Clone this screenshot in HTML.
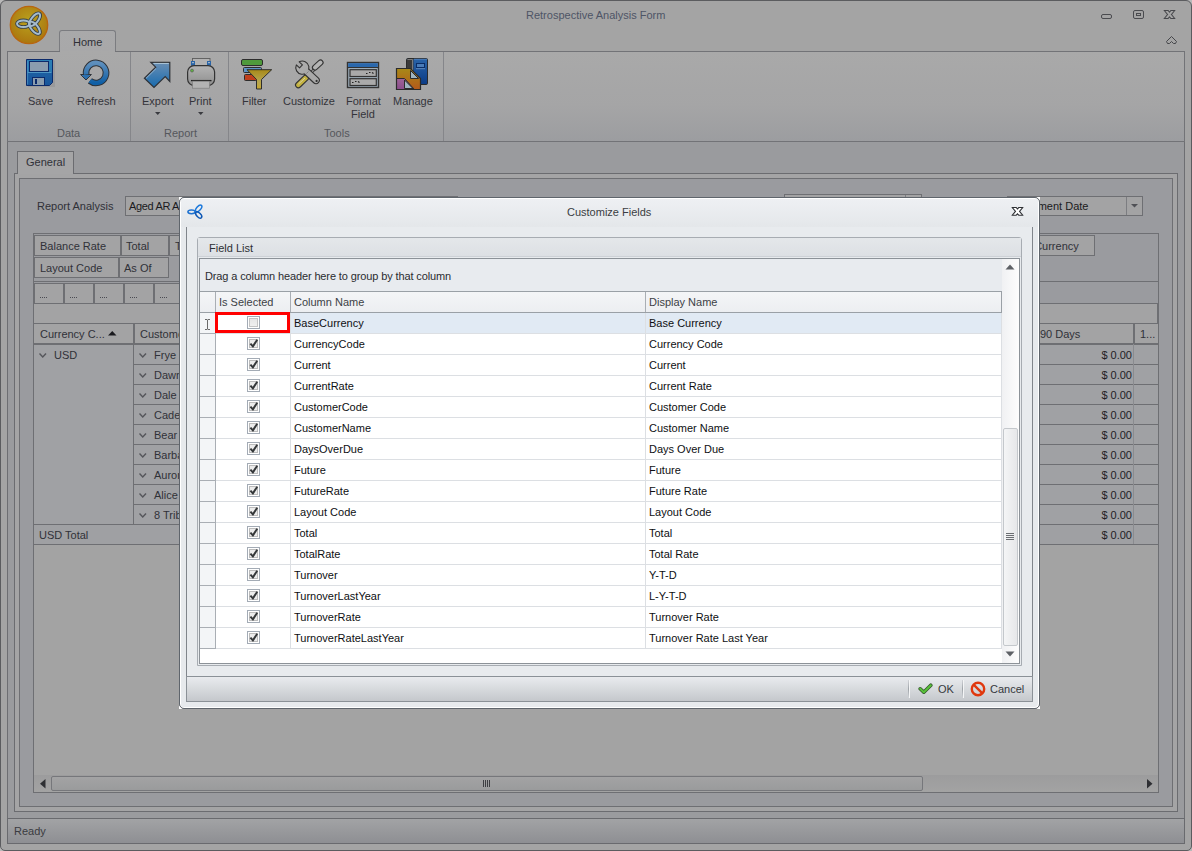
<!DOCTYPE html>
<html><head><meta charset="utf-8">
<style>
*{margin:0;padding:0;box-sizing:border-box}
html,body{width:1192px;height:851px;overflow:hidden;background:#b9b9b9}
body{position:relative;font-family:"Liberation Sans",sans-serif;font-size:11px;color:#2a2a2e}
.a{position:absolute}
.t{position:absolute;white-space:nowrap;line-height:13px}
#win{left:0;top:0;width:1192px;height:851px;background:#a4a4a4;border:1px solid #5b5c5f;border-radius:6px 6px 5px 5px}
#ribbon{left:7px;top:51px;width:1178px;height:91px;border:1px solid #727377;background:linear-gradient(#a9a9a9,#a5a5a6 60%,#9c9da0);}
.sep{position:absolute;width:1px;background:#85868a}
.rl{position:absolute;white-space:nowrap;color:#34343a;font-size:11px;line-height:13px;text-align:center}
.gl{position:absolute;white-space:nowrap;color:#55575c;font-size:11px;line-height:13px}
#content{left:7px;top:142px;width:1178px;height:677px;background:#9a9b9e;border-left:1px solid #6d6e72;border-right:1px solid #6d6e72}
#status{left:7px;top:818px;width:1178px;height:26px;border:1px solid #696a6e;background:linear-gradient(#a2a3a5,#8e8f93)}
</style></head><body>
<div id="win" class="a"></div>
<!-- title -->
<div class="t" style="left:526px;top:9px;color:#4e5566;font-size:11px">Retrospective Analysis Form</div>
<!-- logo -->
<svg class="a" style="left:9px;top:5px" width="41" height="41" viewBox="0 0 41 41">
<defs><radialGradient id="lg" cx="50%" cy="40%" r="60%"><stop offset="0" stop-color="#b9a21e"/><stop offset="1" stop-color="#ab760f"/></radialGradient></defs>
<circle cx="20" cy="20" r="18.7" fill="url(#lg)" stroke="#b8650f" stroke-width="1.3"/>
</svg>
<!-- window buttons -->
<svg class="a" style="left:1098px;top:8px" width="80" height="14" viewBox="0 0 80 14">
<rect x="3.5" y="6.5" width="10" height="4" rx="1.5" fill="none" stroke="#4a4b4f" stroke-width="1"/>
<rect x="35.5" y="2.5" width="10" height="8" rx="1.5" fill="none" stroke="#4a4b4f" stroke-width="1"/>
<rect x="38.5" y="5.5" width="4" height="2" fill="none" stroke="#4a4b4f" stroke-width="1"/>
<defs><clipPath id="wx1"><rect x="60" y="2" width="20" height="9" rx="1"/></clipPath><clipPath id="wx2"><rect x="60" y="3" width="20" height="7"/></clipPath></defs><g clip-path="url(#wx1)" stroke="#46474b" stroke-width="4"><path d="M66.8 0.8L76.2 12.2M76.2 0.8L66.8 12.2"/></g><g clip-path="url(#wx2)" stroke="#a5a5a5" stroke-width="2"><path d="M66.8 0.8L76.2 12.2M76.2 0.8L66.8 12.2"/></g>
</svg>
<svg class="a" style="left:1165px;top:35px" width="13" height="10" viewBox="0 0 13 10"><path d="M6.5 1.5L11.5 6.5L10.5 8.5H8.5L6.5 6.5L4.5 8.5H2.5L1.5 6.5Z" fill="none" stroke="#45464a" stroke-width="1" stroke-linejoin="round"/></svg>
<svg class="a" style="left:1171px;top:829px" width="12" height="12" viewBox="0 0 12 12"><g fill="#6b6c70"><rect x="8" y="1" width="2" height="2"/><rect x="4" y="5" width="2" height="2"/><rect x="8" y="5" width="2" height="2"/><rect x="0" y="9" width="2" height="2"/><rect x="4" y="9" width="2" height="2"/><rect x="8" y="9" width="2" height="2"/></g></svg>
<!-- home tab -->
<div class="a" style="left:59px;top:30px;width:57px;height:22px;border:1px solid #7b7c80;border-bottom:none;border-radius:3px 3px 0 0;background:linear-gradient(#a9a9aa,#a8a8a9)"></div>
<div class="t" style="left:73px;top:36px;color:#2f3036">Home</div>
<!-- ribbon -->
<div id="ribbon" class="a"></div>
<div class="a" style="left:60px;top:51px;width:55px;height:1px;background:#a9a9a9"></div>
<div class="sep" style="left:130px;top:52px;height:89px"></div>
<div class="sep" style="left:228px;top:52px;height:89px"></div>
<div class="sep" style="left:443px;top:52px;height:89px"></div>
<div class="rl" style="left:28px;top:95px">Save</div>
<div class="rl" style="left:77px;top:95px">Refresh</div>
<div class="rl" style="left:142px;top:95px">Export</div>
<div class="rl" style="left:189px;top:95px">Print</div>
<div class="rl" style="left:242px;top:95px">Filter</div>
<div class="rl" style="left:283px;top:95px">Customize</div>
<div class="rl" style="left:346px;top:95px">Format</div>
<div class="rl" style="left:351px;top:108px">Field</div>
<div class="rl" style="left:393px;top:95px">Manage</div>
<div class="gl" style="left:57px;top:127px">Data</div>
<div class="gl" style="left:164px;top:127px">Report</div>
<div class="gl" style="left:324px;top:127px">Tools</div>
<svg class="a" style="left:0;top:0" width="450" height="120" viewBox="0 0 450 120">
<defs>
<linearGradient id="fl1" x1="0" y1="0" x2="0" y2="1"><stop offset="0" stop-color="#2c80b6"/><stop offset="0.47" stop-color="#2a7ab2"/><stop offset="0.5" stop-color="#1d5fa2"/><stop offset="1" stop-color="#17559b"/></linearGradient>
<linearGradient id="rf" x1="0" y1="0" x2="0" y2="1"><stop offset="0" stop-color="#5e8fbd"/><stop offset="1" stop-color="#0f5fa6"/></linearGradient>
<linearGradient id="ex" x1="0" y1="0" x2="0" y2="1"><stop offset="0" stop-color="#6a8fb4"/><stop offset="1" stop-color="#176aae"/></linearGradient>
<linearGradient id="pr" x1="0" y1="0" x2="0" y2="1"><stop offset="0" stop-color="#b4b4b4"/><stop offset="1" stop-color="#8e8e8e"/></linearGradient>
<linearGradient id="fu" x1="0" y1="0" x2="0" y2="1"><stop offset="0" stop-color="#a88a18"/><stop offset="0.6" stop-color="#b5a550"/><stop offset="1" stop-color="#c8a830"/></linearGradient>
<linearGradient id="bk" x1="0" y1="0" x2="0" y2="1"><stop offset="0" stop-color="#2a64a8"/><stop offset="1" stop-color="#0b3b86"/></linearGradient>
<linearGradient id="og" x1="0" y1="0" x2="0" y2="1"><stop offset="0" stop-color="#a88818"/><stop offset="1" stop-color="#b45a1a"/></linearGradient>
</defs>
<!-- logo knot -->
<g fill="none" stroke="#35404a" stroke-width="3.7"><ellipse cx="23.4" cy="23.7" rx="6.4" ry="3.3"/>
<ellipse cx="34.7" cy="19.7" rx="7.7" ry="3.3" transform="rotate(-51.3 34.7 19.7)"/>
<ellipse cx="34.5" cy="27.8" rx="7.5" ry="3.3" transform="rotate(50.4 34.5 27.8)"/></g>
<g fill="none" stroke="#a6bccc" stroke-width="2"><ellipse cx="23.4" cy="23.7" rx="6.4" ry="3.3"/>
<ellipse cx="34.7" cy="19.7" rx="7.7" ry="3.3" transform="rotate(-51.3 34.7 19.7)"/>
<ellipse cx="34.5" cy="27.8" rx="7.5" ry="3.3" transform="rotate(50.4 34.5 27.8)"/></g>
<!-- save -->
<path d="M28 87H55V61L53.8 60H28Z" fill="#8e8e90" opacity="0.5"/>
<path d="M26.5 59.5H52.5V82.5L49.5 85.5H26.5Z" fill="url(#fl1)" stroke="#0c2a6a" stroke-width="1"/>
<path d="M27.5 72.5H51.5" stroke="#4f97c4" stroke-width="1"/><path d="M27.6 61V84.5" stroke="#4b94c4" stroke-width="0.8"/>
<rect x="29.5" y="61.5" width="19" height="10" fill="#8b9dae" stroke="#0c2a6a" stroke-width="1"/>
<rect x="32.5" y="77.5" width="12" height="8" fill="#8b9dae" stroke="#0c2a6a" stroke-width="1"/>
<rect x="35" y="79" width="2" height="5" fill="#0c2a6a"/>
<!-- refresh -->
<path d="M86.2 74.5A10 10 0 1 1 89.9 80.8" fill="none" stroke="#2e3238" stroke-width="6.6"/>
<path d="M80.6 74.5H91.4L86 80Z" fill="url(#rf)" stroke="#2e3238" stroke-width="1" stroke-linejoin="round"/>
<path d="M86.2 74.5A10 10 0 1 1 89.9 80.8" fill="none" stroke="url(#rf)" stroke-width="4.6"/>
<path d="M82 75H90L86 79Z" fill="#2b6fae"/>
<!-- export -->
<path d="M150.8 62.3H169.8V81.4L165.2 76.5L154 87.5L144.4 78.2L155.7 67.2Z" fill="url(#ex)" stroke="#2f3237" stroke-width="1.2" stroke-linejoin="miter"/>
<path d="M153.5 63.4H168.8" stroke="#b9cfdd" stroke-width="0.9"/><path d="M146 78.3L156 68.5" stroke="#a9c3d8" stroke-width="0.8"/>
<!-- print -->
<rect x="192.5" y="58.5" width="17.5" height="8" fill="#b2b2b2" stroke="#5c5c5c" stroke-width="0.9"/>
<rect x="191" y="61" width="4" height="4.8" fill="#2a64a6"/>
<rect x="207" y="61" width="4" height="4.8" fill="#2a64a6"/>
<rect x="192" y="62" width="2" height="1.2" fill="#9ab4cc"/>
<rect x="208" y="62" width="2" height="1.2" fill="#9ab4cc"/>
<rect x="187.6" y="65.6" width="27" height="20" rx="6.5" fill="url(#pr)" stroke="#333" stroke-width="1.2"/>
<circle cx="192" cy="70.6" r="1.5" fill="#5fae44" stroke="#555" stroke-width="0.6"/>
<path d="M191 80.6H211.5" stroke="#222" stroke-width="1.3"/>
<rect x="192.5" y="81.2" width="17" height="7" fill="#b3b3b3" stroke="#7e7e7e" stroke-width="0.7"/>
<!-- filter -->
<rect x="241.5" y="59.5" width="21" height="6" rx="1.5" fill="#4f9a3c" stroke="#2d2d2d" stroke-width="1"/>
<rect x="243.5" y="67.5" width="18" height="5" rx="1" fill="#5b93c5" stroke="#2d2d2d" stroke-width="1"/>
<rect x="244.5" y="74.5" width="12" height="6" rx="1" fill="#c0401c" stroke="#2d2d2d" stroke-width="1"/>
<path d="M247 69.7H271.7L261.5 79.5V89H256.5V79.5Z" fill="url(#fu)" stroke="#2d2d2d" stroke-width="1" stroke-linejoin="round"/>
<!-- customize -->
<path d="M307 77L319 64.5" stroke="#333" stroke-width="3"/>
<path d="M307 77L319 64.5" stroke="#a0a0a0" stroke-width="1.3"/>
<path d="M315 67.5L320.5 62.5" stroke="#333" stroke-width="6.2" stroke-linecap="round"/>
<path d="M315 67.5L320.5 62.5" stroke="#b4b4b4" stroke-width="4" stroke-linecap="round"/>
<path d="M298.3 85L306 77.6" stroke="#333" stroke-width="6.6" stroke-linecap="round"/>
<path d="M298.3 85L306 77.6" stroke="#c3b241" stroke-width="4.4" stroke-linecap="round"/>
<path d="M298.5 84L305 78" stroke="#d8d0a0" stroke-width="1"/>
<g transform="translate(302.3 67.6) rotate(43)">
<rect x="0" y="-3.3" width="22" height="6.6" rx="3.3" fill="#a9a9a9" stroke="#333" stroke-width="1.1"/>
<path d="M-6.2 -2.1A6.6 6.6 0 1 1 -6.2 2.1L-1.8 2.1L-1.8 -2.1Z" fill="#ababab" stroke="#333" stroke-width="1.1" stroke-linejoin="round"/>
<rect x="3" y="-2.7" width="4" height="5.4" fill="#a9a9a9"/>
<circle cx="19.5" cy="0" r="1.1" fill="#333"/>
</g>
<!-- format field -->
<rect x="347.5" y="62.5" width="31" height="25" fill="#9eadb9" stroke="#333" stroke-width="1.4"/>
<rect x="348.2" y="63.2" width="29.6" height="4.3" fill="#2a68ad"/>
<path d="M347.5 67.5H378.5" stroke="#333" stroke-width="1"/>
<rect x="350" y="69.7" width="26.3" height="6.8" fill="#aaaaaa" stroke="#333" stroke-width="1.2"/>
<rect x="350" y="78.7" width="26.3" height="6.8" fill="#aaaaaa" stroke="#333" stroke-width="1.2"/>
<path d="M366 73.5h1.5M369 72.5h1.5M372 72.5l1.5 1" stroke="#222" stroke-width="1.2"/>
<path d="M352 82.5h1.5M355 81.5h1.5M358 81.5l1.5 1" stroke="#222" stroke-width="1.2"/>
<!-- manage -->
<defs><linearGradient id="pk" x1="0" y1="0" x2="0" y2="1"><stop offset="0" stop-color="#b07aa6"/><stop offset="1" stop-color="#8a4c8a"/></linearGradient></defs>
<rect x="406.5" y="58.5" width="21" height="26" rx="1.2" fill="url(#bk)" stroke="#2b2b2b" stroke-width="1"/>
<rect x="407" y="59" width="6.5" height="25" fill="#3a3a3a"/>
<path d="M407.5 59.5H412.5V80" stroke="#8a8a8a" stroke-width="0.8" fill="none"/>
<path d="M414 59.2H427" stroke="#5a88c0" stroke-width="0.8"/>
<rect x="416.5" y="63.5" width="8" height="4" fill="#4a7cb8" stroke="#0b2d66" stroke-width="1"/>
<path d="M416 68.7H425" stroke="#6e96c4" stroke-width="0.8"/>
<path d="M396.5 68.5H410.5L420.5 78.5V89.5H396.5Z" fill="url(#pk)"/>
<path d="M397 69H410.5L420 78.5V89H414L404.5 78.5H397Z" fill="url(#og)"/>
<path d="M397 78.5H404.5L414 89" fill="none" stroke="#2b2b2b" stroke-width="1"/>
<path d="M410.5 70.5V78.5H418.5Z" fill="#9fb4bf" stroke="#2b2b2b" stroke-width="1"/>
<path d="M404.5 80V88.5H413Z" fill="#9fb4bf" stroke="#2b2b2b" stroke-width="1"/>
<path d="M396.5 68.5H410.5L420.5 78.5V89.5H396.5Z" fill="none" stroke="#2b2b2b" stroke-width="1.2" stroke-linejoin="miter"/>
<!-- dropdown arrows -->
<path d="M155 112H160.5L157.75 115Z" fill="#3a3b40"/>
<path d="M198 112H203.5L200.75 115Z" fill="#3a3b40"/>
</svg>
<!-- content -->
<div id="content" class="a"></div>

<!-- tab page -->
<div class="a" style="left:17px;top:151px;width:57px;height:23px;border:1px solid #6b6c70;border-bottom:none;background:#a5a5a6;z-index:2"></div>
<div class="t" style="left:26px;top:156px;color:#303138;z-index:3">General</div>
<div class="a" style="left:14px;top:173px;width:1164px;height:639px;border:1px solid #6b6c70;background:#a4a4a5"></div>
<div class="a" style="left:19px;top:178px;width:1154px;height:629px;border:1px solid #6e6f73;background:#9a9b9f"></div>
<div class="t" style="left:37px;top:200px;color:#303138">Report Analysis</div>
<div class="a" style="left:125px;top:196px;width:333px;height:20px;border:1px solid #6e6f73;background:#a3a3a4"></div>
<div class="t" style="left:129px;top:200px;color:#1a1a20;letter-spacing:-0.35px">Aged AR Analysis</div>
<div class="a" style="left:784px;top:194px;width:138px;height:20px;border:1px solid #6e6f73;background:#a3a3a4"></div><div class="a" style="left:905px;top:195px;width:1px;height:18px;background:#7c7d81"></div>
<div class="a" style="left:1007px;top:196px;width:136px;height:20px;border:1px solid #6e6f73;background:#a3a3a4"></div>
<div class="a" style="left:1126px;top:197px;width:1px;height:18px;background:#7c7d81"></div>
<div class="t" style="left:1012px;top:200px;color:#1a1a20">Statement Date</div>
<svg class="a" style="left:1131px;top:204px" width="8" height="4"><path d="M0 0H7L3.5 3.5Z" fill="#505156"/></svg>
<!-- grid -->
<div id="grid" class="a" style="left:33px;top:233px;width:1126px;height:560px;border:1px solid #6e6f73;background:#a3a3a3;overflow:hidden">
</div>
<div class="a" style="left:34px;top:234px;width:1124px;height:47px;background:#9a9b9f"></div>
<div class="a" style="left:34px;top:235px;width:87px;height:21px;border:1px solid #6e6f73;background:#a3a3a4"></div>
<div class="t" style="left:40px;top:240px;color:#303138">Balance Rate</div>
<div class="a" style="left:121px;top:235px;width:48px;height:21px;border:1px solid #6e6f73;background:#a3a3a4"></div>
<div class="t" style="left:126px;top:240px;color:#303138">Total</div>
<div class="a" style="left:169px;top:235px;width:60px;height:21px;border:1px solid #6e6f73;background:#a3a3a4"></div>
<div class="t" style="left:175px;top:240px;color:#303138">Total Rate</div>
<div class="a" style="left:34px;top:257px;width:85px;height:21px;border:1px solid #6e6f73;background:#a3a3a4"></div>
<div class="t" style="left:40px;top:262px;color:#303138">Layout Code</div>
<div class="a" style="left:119px;top:257px;width:50px;height:21px;border:1px solid #6e6f73;background:#a3a3a4"></div>
<div class="t" style="left:124px;top:262px;color:#303138">As Of</div>
<div class="a" style="left:1000px;top:235px;width:95px;height:21px;border:1px solid #6e6f73;background:#a3a3a4"></div>
<div class="t" style="left:1006px;top:240px;color:#303138">Base Currency</div>
<div class="a" style="left:34px;top:281px;width:1124px;height:22px;border-top:1px solid #6e6f73;background:#9a9b9f"></div>
<div class="a" style="left:34px;top:283px;width:30px;height:21px;border:1px solid #6e6f73;background:#a3a3a4"></div>
<div class="a" style="left:40px;top:297px;width:7px;height:1px;background:repeating-linear-gradient(90deg,#4a4b52 0 1px,transparent 1px 2px)"></div>
<div class="a" style="left:64px;top:283px;width:30px;height:21px;border:1px solid #6e6f73;background:#a3a3a4"></div>
<div class="a" style="left:70px;top:297px;width:7px;height:1px;background:repeating-linear-gradient(90deg,#4a4b52 0 1px,transparent 1px 2px)"></div>
<div class="a" style="left:94px;top:283px;width:30px;height:21px;border:1px solid #6e6f73;background:#a3a3a4"></div>
<div class="a" style="left:100px;top:297px;width:7px;height:1px;background:repeating-linear-gradient(90deg,#4a4b52 0 1px,transparent 1px 2px)"></div>
<div class="a" style="left:124px;top:283px;width:30px;height:21px;border:1px solid #6e6f73;background:#a3a3a4"></div>
<div class="a" style="left:130px;top:297px;width:7px;height:1px;background:repeating-linear-gradient(90deg,#4a4b52 0 1px,transparent 1px 2px)"></div>
<div class="a" style="left:154px;top:283px;width:30px;height:21px;border:1px solid #6e6f73;background:#a3a3a4"></div>
<div class="a" style="left:160px;top:297px;width:7px;height:1px;background:repeating-linear-gradient(90deg,#4a4b52 0 1px,transparent 1px 2px)"></div>
<div class="a" style="left:184px;top:283px;width:30px;height:21px;border:1px solid #6e6f73;background:#a3a3a4"></div>
<div class="a" style="left:190px;top:297px;width:7px;height:1px;background:repeating-linear-gradient(90deg,#4a4b52 0 1px,transparent 1px 2px)"></div>
<div class="a" style="left:34px;top:303px;width:1124px;height:21px;border-top:1px solid #6e6f73;border-right:1px solid #6e6f73;background:#a3a3a4"></div>
<div class="a" style="left:34px;top:323px;width:1124px;height:22px;border-top:1px solid #6e6f73;border-bottom:2px solid #6e6f73;background:#a3a3a4"></div>
<div class="a" style="left:133px;top:324px;width:2px;height:19px;background:#6e6f73"></div>
<div class="a" style="left:1133px;top:324px;width:2px;height:19px;background:#6e6f73"></div>
<div class="t" style="left:40px;top:328px;color:#303138">Currency C...</div>
<svg class="a" style="left:108px;top:331px" width="9" height="5"><path d="M0 4.5H8.5L4.25 0Z" fill="#1a1a1e"/></svg>
<div class="t" style="left:140px;top:328px;color:#303138">Customer Name</div>
<div class="t" style="left:1040px;top:328px;color:#303138">90 Days</div>
<div class="t" style="left:1140px;top:328px;color:#303138">1...</div>
<div class="a" style="left:34px;top:345px;width:100px;height:179px;border-right:1px solid #6e6f73;background:#a0a1a4"></div>
<svg class="a" style="left:39px;top:353px" width="8" height="5"><path d="M0.5 0.5L3.75 4L7 0.5" fill="none" stroke="#55565b" stroke-width="1.4"/></svg>
<div class="t" style="left:54px;top:349px;color:#303138">USD</div>
<div class="a" style="left:134px;top:345px;width:1024px;height:20px;border-bottom:1px solid #6e6f73;background:#a0a1a4"></div>
<svg class="a" style="left:139px;top:353px" width="8" height="5"><path d="M0.5 0.5L3.75 4L7 0.5" fill="none" stroke="#55565b" stroke-width="1.4"/></svg>
<div class="t" style="left:154px;top:349px;color:#303138">Frye Electronics</div>
<div class="a" style="left:134px;top:365px;width:1024px;height:20px;border-bottom:1px solid #6e6f73;background:#a0a1a4"></div>
<svg class="a" style="left:139px;top:373px" width="8" height="5"><path d="M0.5 0.5L3.75 4L7 0.5" fill="none" stroke="#55565b" stroke-width="1.4"/></svg>
<div class="t" style="left:154px;top:369px;color:#303138">Dawn Mechanical</div>
<div class="a" style="left:134px;top:385px;width:1024px;height:20px;border-bottom:1px solid #6e6f73;background:#a0a1a4"></div>
<svg class="a" style="left:139px;top:393px" width="8" height="5"><path d="M0.5 0.5L3.75 4L7 0.5" fill="none" stroke="#55565b" stroke-width="1.4"/></svg>
<div class="t" style="left:154px;top:389px;color:#303138">Dale Industries</div>
<div class="a" style="left:134px;top:405px;width:1024px;height:20px;border-bottom:1px solid #6e6f73;background:#a0a1a4"></div>
<svg class="a" style="left:139px;top:413px" width="8" height="5"><path d="M0.5 0.5L3.75 4L7 0.5" fill="none" stroke="#55565b" stroke-width="1.4"/></svg>
<div class="t" style="left:154px;top:409px;color:#303138">Cade Corporation</div>
<div class="a" style="left:134px;top:425px;width:1024px;height:20px;border-bottom:1px solid #6e6f73;background:#a0a1a4"></div>
<svg class="a" style="left:139px;top:433px" width="8" height="5"><path d="M0.5 0.5L3.75 4L7 0.5" fill="none" stroke="#55565b" stroke-width="1.4"/></svg>
<div class="t" style="left:154px;top:429px;color:#303138">Bear Creek</div>
<div class="a" style="left:134px;top:445px;width:1024px;height:20px;border-bottom:1px solid #6e6f73;background:#a0a1a4"></div>
<svg class="a" style="left:139px;top:453px" width="8" height="5"><path d="M0.5 0.5L3.75 4L7 0.5" fill="none" stroke="#55565b" stroke-width="1.4"/></svg>
<div class="t" style="left:154px;top:449px;color:#303138">Barbara Tomkins</div>
<div class="a" style="left:134px;top:465px;width:1024px;height:20px;border-bottom:1px solid #6e6f73;background:#a0a1a4"></div>
<svg class="a" style="left:139px;top:473px" width="8" height="5"><path d="M0.5 0.5L3.75 4L7 0.5" fill="none" stroke="#55565b" stroke-width="1.4"/></svg>
<div class="t" style="left:154px;top:469px;color:#303138">Aurora Inc</div>
<div class="a" style="left:134px;top:485px;width:1024px;height:20px;border-bottom:1px solid #6e6f73;background:#a0a1a4"></div>
<svg class="a" style="left:139px;top:493px" width="8" height="5"><path d="M0.5 0.5L3.75 4L7 0.5" fill="none" stroke="#55565b" stroke-width="1.4"/></svg>
<div class="t" style="left:154px;top:489px;color:#303138">Alice Springs</div>
<div class="a" style="left:134px;top:505px;width:1024px;height:20px;border-bottom:1px solid #6e6f73;background:#a0a1a4"></div>
<svg class="a" style="left:139px;top:513px" width="8" height="5"><path d="M0.5 0.5L3.75 4L7 0.5" fill="none" stroke="#55565b" stroke-width="1.4"/></svg>
<div class="t" style="left:154px;top:509px;color:#303138">8 Tribes Casino</div>
<div class="a" style="left:34px;top:524px;width:1124px;height:21px;border-top:1px solid #6e6f73;border-bottom:1px solid #6e6f73;background:#9fa0a3"></div>
<div class="t" style="left:39px;top:529px;color:#303138">USD Total</div>
<div class="t" style="left:1097px;top:349px;color:#1e1e24;width:35px;text-align:right">$ 0.00</div>
<div class="a" style="left:1133px;top:344px;width:1px;height:20px;background:#8a8b8f"></div>
<div class="t" style="left:1097px;top:369px;color:#1e1e24;width:35px;text-align:right">$ 0.00</div>
<div class="a" style="left:1133px;top:364px;width:1px;height:20px;background:#8a8b8f"></div>
<div class="t" style="left:1097px;top:389px;color:#1e1e24;width:35px;text-align:right">$ 0.00</div>
<div class="a" style="left:1133px;top:384px;width:1px;height:20px;background:#8a8b8f"></div>
<div class="t" style="left:1097px;top:409px;color:#1e1e24;width:35px;text-align:right">$ 0.00</div>
<div class="a" style="left:1133px;top:404px;width:1px;height:20px;background:#8a8b8f"></div>
<div class="t" style="left:1097px;top:429px;color:#1e1e24;width:35px;text-align:right">$ 0.00</div>
<div class="a" style="left:1133px;top:424px;width:1px;height:20px;background:#8a8b8f"></div>
<div class="t" style="left:1097px;top:449px;color:#1e1e24;width:35px;text-align:right">$ 0.00</div>
<div class="a" style="left:1133px;top:444px;width:1px;height:20px;background:#8a8b8f"></div>
<div class="t" style="left:1097px;top:469px;color:#1e1e24;width:35px;text-align:right">$ 0.00</div>
<div class="a" style="left:1133px;top:464px;width:1px;height:20px;background:#8a8b8f"></div>
<div class="t" style="left:1097px;top:489px;color:#1e1e24;width:35px;text-align:right">$ 0.00</div>
<div class="a" style="left:1133px;top:484px;width:1px;height:20px;background:#8a8b8f"></div>
<div class="t" style="left:1097px;top:509px;color:#1e1e24;width:35px;text-align:right">$ 0.00</div>
<div class="a" style="left:1133px;top:504px;width:1px;height:20px;background:#8a8b8f"></div>
<div class="t" style="left:1097px;top:529px;color:#1e1e24;width:35px;text-align:right">$ 0.00</div>
<div class="a" style="left:1133px;top:524px;width:1px;height:20px;background:#8a8b8f"></div>
<div class="a" style="left:34px;top:775px;width:1124px;height:17px;background:linear-gradient(#9c9c9d,#a3a3a3)"></div>
<svg class="a" style="left:40px;top:779px" width="6" height="10"><path d="M5.5 0V9.5L0 4.75Z" fill="#2e2f33"/></svg>
<svg class="a" style="left:1147px;top:779px" width="6" height="10"><path d="M0 0V9.5L5.5 4.75Z" fill="#2e2f33"/></svg>
<div class="a" style="left:51px;top:776px;width:872px;height:15px;border:1px solid #76777b;border-radius:2px;background:linear-gradient(#a3a3a4,#9a9b9c)"></div>
<div class="a" style="left:483px;top:780px;width:1px;height:7px;background:#3d3e42"></div>
<div class="a" style="left:485px;top:780px;width:1px;height:7px;background:#3d3e42"></div>
<div class="a" style="left:487px;top:780px;width:1px;height:7px;background:#3d3e42"></div>
<div class="a" style="left:489px;top:780px;width:1px;height:7px;background:#3d3e42"></div>
<div id="status" class="a"></div>
<div class="t" style="left:14px;top:825px;color:#3a3b40">Ready</div>
<div class="a" style="left:179px;top:197px;width:3px;height:3px;background:#fff"></div><div class="a" style="left:1037px;top:197px;width:3px;height:3px;background:#fff"></div><div class="a" style="left:179px;top:706px;width:3px;height:3px;background:#fff"></div><div class="a" style="left:1037px;top:706px;width:3px;height:3px;background:#fff"></div>
<div id="dlg" class="a" style="left:179px;top:197px;width:861px;height:512px;border:1px solid #5f656c;border-radius:5px;background:#e7eaed;box-shadow:inset 1px 1px 0 #fff, inset -1px -1px 0 #fff;overflow:hidden">
<div class="a" style="left:1px;top:1px;width:857px;height:28px;background:linear-gradient(#eef0f3,#e4e7ea)"></div>
</div>
<svg class="a" style="left:184px;top:201px" width="24" height="22" viewBox="0 0 24 22"><g fill="none" stroke-width="1.5">
<ellipse cx="7.5" cy="10.8" rx="3.6" ry="1.9" stroke="#1f72d0"/>
<ellipse cx="14.7" cy="7.4" rx="4.1" ry="2" transform="rotate(-48.5 14.7 7.4)" stroke="#1a78dc"/>
<ellipse cx="14.7" cy="14" rx="3.8" ry="2" transform="rotate(44.5 14.7 14)" stroke="#0d57b5"/>
</g></svg>
<div class="t" style="left:567px;top:206px;color:#3a3d42">Customize Fields</div>
<svg class="a" style="left:1011px;top:206px" width="13" height="11" viewBox="0 0 13 11"><defs><clipPath id="cx1"><rect x="0" y="1" width="13" height="8.8" rx="1"/></clipPath><clipPath id="cx2"><rect x="0" y="2" width="13" height="6.8"/></clipPath></defs>
<g clip-path="url(#cx1)" stroke="#2e3034" stroke-width="4.2" stroke-linecap="butt"><path d="M1.7 -0.3L11.3 11.1M11.3 -0.3L1.7 11.1"/></g>
<g clip-path="url(#cx2)" stroke="#fff" stroke-width="2"><path d="M1.7 -0.3L11.3 11.1M11.3 -0.3L1.7 11.1"/></g></svg>
<div class="a" style="left:186px;top:227px;width:847px;height:450px;border-left:1px solid #80858b;border-right:1px solid #80858b;background:#e8ebee"></div>
<div class="a" style="left:197px;top:237px;width:825px;height:429px;border:1px solid #a7acb2;border-radius:3px 3px 0 0;background:#e8ebee"></div>
<div class="a" style="left:198px;top:238px;width:823px;height:19px;background:linear-gradient(#e4e7ea,#dde0e4);border-bottom:1px solid #cdd1d6"></div>
<div class="t" style="left:209px;top:242px;color:#2c2f34">Field List</div>
<div class="a" style="left:199px;top:258px;width:821px;height:406px;border:1px solid #8c9298;background:#fff"></div>
<div class="a" style="left:200px;top:259px;width:802px;height:32px;background:#e8ebef"></div>
<div class="t" style="left:205px;top:270px;color:#2a2c30;letter-spacing:-0.12px">Drag a column header here to group by that column</div>
<div class="a" style="left:200px;top:291px;width:802px;height:22px;border-top:1px solid #9aa0a6;border-bottom:1px solid #9aa0a6;border-right:1px solid #9aa0a6;background:linear-gradient(#f4f5f7,#eceef1)"></div>
<div class="a" style="left:215px;top:292px;width:1px;height:20px;background:#a9aeb4"></div>
<div class="a" style="left:290px;top:292px;width:1px;height:20px;background:#a9aeb4"></div>
<div class="a" style="left:645px;top:292px;width:1px;height:20px;background:#a9aeb4"></div>
<div class="t" style="left:219px;top:296px;color:#3c3f45">Is Selected</div>
<div class="t" style="left:294px;top:296px;color:#3c3f45">Column Name</div>
<div class="t" style="left:649px;top:296px;color:#3c3f45">Display Name</div>
<div class="a" style="left:200px;top:313px;width:16px;height:336px;background:#f3f5f7;border-right:1px solid #a9aeb4"></div>
<div class="a" style="left:291px;top:313px;width:711px;height:21px;background:#e1eaf4;border-bottom:1px solid #dcdfe3"></div>
<div class="a" style="left:216px;top:333px;width:75px;height:1px;background:#dcdfe3"></div>
<div class="a" style="left:200px;top:333px;width:15px;height:1px;background:#a9aeb4"></div>
<div class="t" style="left:294px;top:317px;color:#0e0f12">BaseCurrency</div>
<div class="t" style="left:649px;top:317px;color:#0e0f12">Base Currency</div>
<div class="a" style="left:247px;top:316px;width:13px;height:13px;border:1px solid #a3abb5;background:#fff"></div><div class="a" style="left:249px;top:318px;width:9px;height:9px;border:1px solid #c4c4c4;background:linear-gradient(#e6e6e6,#f0f0f0)"></div>
<div class="a" style="left:216px;top:354px;width:786px;height:1px;background:#dcdfe3"></div>
<div class="a" style="left:200px;top:354px;width:15px;height:1px;background:#a9aeb4"></div>
<div class="t" style="left:294px;top:338px;color:#0e0f12">CurrencyCode</div>
<div class="t" style="left:649px;top:338px;color:#0e0f12">Currency Code</div>
<div class="a" style="left:247px;top:337px;width:13px;height:13px;border:1px solid #a3abb5;background:#fff"></div><div class="a" style="left:249px;top:339px;width:9px;height:9px;border:1px solid #bcbcbc;background:#ececec"></div>
<svg class="a" style="left:249px;top:339px" width="10" height="10" viewBox="0 0 10 10"><path d="M1.4 4.6L3.9 7.4L8.2 0.8" fill="none" stroke="#35383a" stroke-width="2"/></svg>
<div class="a" style="left:216px;top:375px;width:786px;height:1px;background:#dcdfe3"></div>
<div class="a" style="left:200px;top:375px;width:15px;height:1px;background:#a9aeb4"></div>
<div class="t" style="left:294px;top:359px;color:#0e0f12">Current</div>
<div class="t" style="left:649px;top:359px;color:#0e0f12">Current</div>
<div class="a" style="left:247px;top:358px;width:13px;height:13px;border:1px solid #a3abb5;background:#fff"></div><div class="a" style="left:249px;top:360px;width:9px;height:9px;border:1px solid #bcbcbc;background:#ececec"></div>
<svg class="a" style="left:249px;top:360px" width="10" height="10" viewBox="0 0 10 10"><path d="M1.4 4.6L3.9 7.4L8.2 0.8" fill="none" stroke="#35383a" stroke-width="2"/></svg>
<div class="a" style="left:216px;top:396px;width:786px;height:1px;background:#dcdfe3"></div>
<div class="a" style="left:200px;top:396px;width:15px;height:1px;background:#a9aeb4"></div>
<div class="t" style="left:294px;top:380px;color:#0e0f12">CurrentRate</div>
<div class="t" style="left:649px;top:380px;color:#0e0f12">Current Rate</div>
<div class="a" style="left:247px;top:379px;width:13px;height:13px;border:1px solid #a3abb5;background:#fff"></div><div class="a" style="left:249px;top:381px;width:9px;height:9px;border:1px solid #bcbcbc;background:#ececec"></div>
<svg class="a" style="left:249px;top:381px" width="10" height="10" viewBox="0 0 10 10"><path d="M1.4 4.6L3.9 7.4L8.2 0.8" fill="none" stroke="#35383a" stroke-width="2"/></svg>
<div class="a" style="left:216px;top:417px;width:786px;height:1px;background:#dcdfe3"></div>
<div class="a" style="left:200px;top:417px;width:15px;height:1px;background:#a9aeb4"></div>
<div class="t" style="left:294px;top:401px;color:#0e0f12">CustomerCode</div>
<div class="t" style="left:649px;top:401px;color:#0e0f12">Customer Code</div>
<div class="a" style="left:247px;top:400px;width:13px;height:13px;border:1px solid #a3abb5;background:#fff"></div><div class="a" style="left:249px;top:402px;width:9px;height:9px;border:1px solid #bcbcbc;background:#ececec"></div>
<svg class="a" style="left:249px;top:402px" width="10" height="10" viewBox="0 0 10 10"><path d="M1.4 4.6L3.9 7.4L8.2 0.8" fill="none" stroke="#35383a" stroke-width="2"/></svg>
<div class="a" style="left:216px;top:438px;width:786px;height:1px;background:#dcdfe3"></div>
<div class="a" style="left:200px;top:438px;width:15px;height:1px;background:#a9aeb4"></div>
<div class="t" style="left:294px;top:422px;color:#0e0f12">CustomerName</div>
<div class="t" style="left:649px;top:422px;color:#0e0f12">Customer Name</div>
<div class="a" style="left:247px;top:421px;width:13px;height:13px;border:1px solid #a3abb5;background:#fff"></div><div class="a" style="left:249px;top:423px;width:9px;height:9px;border:1px solid #bcbcbc;background:#ececec"></div>
<svg class="a" style="left:249px;top:423px" width="10" height="10" viewBox="0 0 10 10"><path d="M1.4 4.6L3.9 7.4L8.2 0.8" fill="none" stroke="#35383a" stroke-width="2"/></svg>
<div class="a" style="left:216px;top:459px;width:786px;height:1px;background:#dcdfe3"></div>
<div class="a" style="left:200px;top:459px;width:15px;height:1px;background:#a9aeb4"></div>
<div class="t" style="left:294px;top:443px;color:#0e0f12">DaysOverDue</div>
<div class="t" style="left:649px;top:443px;color:#0e0f12">Days Over Due</div>
<div class="a" style="left:247px;top:442px;width:13px;height:13px;border:1px solid #a3abb5;background:#fff"></div><div class="a" style="left:249px;top:444px;width:9px;height:9px;border:1px solid #bcbcbc;background:#ececec"></div>
<svg class="a" style="left:249px;top:444px" width="10" height="10" viewBox="0 0 10 10"><path d="M1.4 4.6L3.9 7.4L8.2 0.8" fill="none" stroke="#35383a" stroke-width="2"/></svg>
<div class="a" style="left:216px;top:480px;width:786px;height:1px;background:#dcdfe3"></div>
<div class="a" style="left:200px;top:480px;width:15px;height:1px;background:#a9aeb4"></div>
<div class="t" style="left:294px;top:464px;color:#0e0f12">Future</div>
<div class="t" style="left:649px;top:464px;color:#0e0f12">Future</div>
<div class="a" style="left:247px;top:463px;width:13px;height:13px;border:1px solid #a3abb5;background:#fff"></div><div class="a" style="left:249px;top:465px;width:9px;height:9px;border:1px solid #bcbcbc;background:#ececec"></div>
<svg class="a" style="left:249px;top:465px" width="10" height="10" viewBox="0 0 10 10"><path d="M1.4 4.6L3.9 7.4L8.2 0.8" fill="none" stroke="#35383a" stroke-width="2"/></svg>
<div class="a" style="left:216px;top:501px;width:786px;height:1px;background:#dcdfe3"></div>
<div class="a" style="left:200px;top:501px;width:15px;height:1px;background:#a9aeb4"></div>
<div class="t" style="left:294px;top:485px;color:#0e0f12">FutureRate</div>
<div class="t" style="left:649px;top:485px;color:#0e0f12">Future Rate</div>
<div class="a" style="left:247px;top:484px;width:13px;height:13px;border:1px solid #a3abb5;background:#fff"></div><div class="a" style="left:249px;top:486px;width:9px;height:9px;border:1px solid #bcbcbc;background:#ececec"></div>
<svg class="a" style="left:249px;top:486px" width="10" height="10" viewBox="0 0 10 10"><path d="M1.4 4.6L3.9 7.4L8.2 0.8" fill="none" stroke="#35383a" stroke-width="2"/></svg>
<div class="a" style="left:216px;top:522px;width:786px;height:1px;background:#dcdfe3"></div>
<div class="a" style="left:200px;top:522px;width:15px;height:1px;background:#a9aeb4"></div>
<div class="t" style="left:294px;top:506px;color:#0e0f12">Layout Code</div>
<div class="t" style="left:649px;top:506px;color:#0e0f12">Layout Code</div>
<div class="a" style="left:247px;top:505px;width:13px;height:13px;border:1px solid #a3abb5;background:#fff"></div><div class="a" style="left:249px;top:507px;width:9px;height:9px;border:1px solid #bcbcbc;background:#ececec"></div>
<svg class="a" style="left:249px;top:507px" width="10" height="10" viewBox="0 0 10 10"><path d="M1.4 4.6L3.9 7.4L8.2 0.8" fill="none" stroke="#35383a" stroke-width="2"/></svg>
<div class="a" style="left:216px;top:543px;width:786px;height:1px;background:#dcdfe3"></div>
<div class="a" style="left:200px;top:543px;width:15px;height:1px;background:#a9aeb4"></div>
<div class="t" style="left:294px;top:527px;color:#0e0f12">Total</div>
<div class="t" style="left:649px;top:527px;color:#0e0f12">Total</div>
<div class="a" style="left:247px;top:526px;width:13px;height:13px;border:1px solid #a3abb5;background:#fff"></div><div class="a" style="left:249px;top:528px;width:9px;height:9px;border:1px solid #bcbcbc;background:#ececec"></div>
<svg class="a" style="left:249px;top:528px" width="10" height="10" viewBox="0 0 10 10"><path d="M1.4 4.6L3.9 7.4L8.2 0.8" fill="none" stroke="#35383a" stroke-width="2"/></svg>
<div class="a" style="left:216px;top:564px;width:786px;height:1px;background:#dcdfe3"></div>
<div class="a" style="left:200px;top:564px;width:15px;height:1px;background:#a9aeb4"></div>
<div class="t" style="left:294px;top:548px;color:#0e0f12">TotalRate</div>
<div class="t" style="left:649px;top:548px;color:#0e0f12">Total Rate</div>
<div class="a" style="left:247px;top:547px;width:13px;height:13px;border:1px solid #a3abb5;background:#fff"></div><div class="a" style="left:249px;top:549px;width:9px;height:9px;border:1px solid #bcbcbc;background:#ececec"></div>
<svg class="a" style="left:249px;top:549px" width="10" height="10" viewBox="0 0 10 10"><path d="M1.4 4.6L3.9 7.4L8.2 0.8" fill="none" stroke="#35383a" stroke-width="2"/></svg>
<div class="a" style="left:216px;top:585px;width:786px;height:1px;background:#dcdfe3"></div>
<div class="a" style="left:200px;top:585px;width:15px;height:1px;background:#a9aeb4"></div>
<div class="t" style="left:294px;top:569px;color:#0e0f12">Turnover</div>
<div class="t" style="left:649px;top:569px;color:#0e0f12">Y-T-D</div>
<div class="a" style="left:247px;top:568px;width:13px;height:13px;border:1px solid #a3abb5;background:#fff"></div><div class="a" style="left:249px;top:570px;width:9px;height:9px;border:1px solid #bcbcbc;background:#ececec"></div>
<svg class="a" style="left:249px;top:570px" width="10" height="10" viewBox="0 0 10 10"><path d="M1.4 4.6L3.9 7.4L8.2 0.8" fill="none" stroke="#35383a" stroke-width="2"/></svg>
<div class="a" style="left:216px;top:606px;width:786px;height:1px;background:#dcdfe3"></div>
<div class="a" style="left:200px;top:606px;width:15px;height:1px;background:#a9aeb4"></div>
<div class="t" style="left:294px;top:590px;color:#0e0f12">TurnoverLastYear</div>
<div class="t" style="left:649px;top:590px;color:#0e0f12">L-Y-T-D</div>
<div class="a" style="left:247px;top:589px;width:13px;height:13px;border:1px solid #a3abb5;background:#fff"></div><div class="a" style="left:249px;top:591px;width:9px;height:9px;border:1px solid #bcbcbc;background:#ececec"></div>
<svg class="a" style="left:249px;top:591px" width="10" height="10" viewBox="0 0 10 10"><path d="M1.4 4.6L3.9 7.4L8.2 0.8" fill="none" stroke="#35383a" stroke-width="2"/></svg>
<div class="a" style="left:216px;top:627px;width:786px;height:1px;background:#dcdfe3"></div>
<div class="a" style="left:200px;top:627px;width:15px;height:1px;background:#a9aeb4"></div>
<div class="t" style="left:294px;top:611px;color:#0e0f12">TurnoverRate</div>
<div class="t" style="left:649px;top:611px;color:#0e0f12">Turnover Rate</div>
<div class="a" style="left:247px;top:610px;width:13px;height:13px;border:1px solid #a3abb5;background:#fff"></div><div class="a" style="left:249px;top:612px;width:9px;height:9px;border:1px solid #bcbcbc;background:#ececec"></div>
<svg class="a" style="left:249px;top:612px" width="10" height="10" viewBox="0 0 10 10"><path d="M1.4 4.6L3.9 7.4L8.2 0.8" fill="none" stroke="#35383a" stroke-width="2"/></svg>
<div class="a" style="left:216px;top:648px;width:786px;height:1px;background:#dcdfe3"></div>
<div class="a" style="left:200px;top:648px;width:15px;height:1px;background:#a9aeb4"></div>
<div class="t" style="left:294px;top:632px;color:#0e0f12">TurnoverRateLastYear</div>
<div class="t" style="left:649px;top:632px;color:#0e0f12">Turnover Rate Last Year</div>
<div class="a" style="left:247px;top:631px;width:13px;height:13px;border:1px solid #a3abb5;background:#fff"></div><div class="a" style="left:249px;top:633px;width:9px;height:9px;border:1px solid #bcbcbc;background:#ececec"></div>
<svg class="a" style="left:249px;top:633px" width="10" height="10" viewBox="0 0 10 10"><path d="M1.4 4.6L3.9 7.4L8.2 0.8" fill="none" stroke="#35383a" stroke-width="2"/></svg>
<div class="a" style="left:290px;top:313px;width:1px;height:336px;background:#dcdfe3"></div>
<div class="a" style="left:645px;top:313px;width:1px;height:336px;background:#dcdfe3"></div>
<div class="a" style="left:1001px;top:313px;width:1px;height:336px;background:#dcdfe3"></div>
<div class="a" style="left:215px;top:312px;width:75px;height:21px;border:3px solid #ff0000"></div>
<svg class="a" style="left:204px;top:319px" width="7" height="11" viewBox="0 0 7 11"><path d="M1 0.5H3L3.5 1L4 0.5H6M3.5 1V10M1 10.5H3L3.5 10L4 10.5H6" fill="none" stroke="#6a6a6a" stroke-width="1"/></svg>
<div class="a" style="left:1002px;top:259px;width:17px;height:404px;background:linear-gradient(90deg,#f0f1f3,#fdfdfd)"></div>
<svg class="a" style="left:1005px;top:264px" width="10" height="6"><path d="M0.5 5.5H9.5L5 0.5Z" fill="#5e6166"/></svg>
<svg class="a" style="left:1005px;top:651px" width="10" height="6"><path d="M0.5 0.5H9.5L5 5.5Z" fill="#5e6166"/></svg>
<div class="a" style="left:1003px;top:428px;width:15px;height:218px;border:1px solid #c4c8cc;border-radius:2px;background:linear-gradient(90deg,#f4f5f6,#e6e7e9)"></div>
<div class="a" style="left:1006px;top:533px;width:8px;height:1px;background:#6b6e72"></div>
<div class="a" style="left:1006px;top:535px;width:8px;height:1px;background:#6b6e72"></div>
<div class="a" style="left:1006px;top:537px;width:8px;height:1px;background:#6b6e72"></div>
<div class="a" style="left:1006px;top:539px;width:8px;height:1px;background:#6b6e72"></div>
<div class="a" style="left:186px;top:676px;width:847px;height:26px;border:1px solid #8b9197;background:linear-gradient(#e9ebee,#c5c8cc)"></div>
<div class="a" style="left:908px;top:680px;width:1px;height:18px;background:linear-gradient(#d0d3d7,#9ea3a8 50%,#d0d3d7);box-shadow:1px 0 0 #f4f5f6"></div>
<div class="a" style="left:962px;top:680px;width:1px;height:18px;background:linear-gradient(#d0d3d7,#9ea3a8 50%,#d0d3d7);box-shadow:1px 0 0 #f4f5f6"></div>
<svg class="a" style="left:918px;top:682px" width="15" height="13" viewBox="0 0 15 13"><path d="M2.2 6.8L5.8 10.2L12.8 3.2" fill="none" stroke="#34562c" stroke-width="3.6" stroke-linejoin="round" stroke-linecap="round"/><path d="M2.2 6.8L5.8 10.2L12.8 3.2" fill="none" stroke="#58c23a" stroke-width="2" stroke-linejoin="round" stroke-linecap="round"/></svg>
<div class="t" style="left:938px;top:683px;color:#35383d">OK</div>
<svg class="a" style="left:970px;top:681px" width="16" height="16" viewBox="0 0 16 16"><circle cx="8" cy="8" r="6.2" fill="none" stroke="#e0380e" stroke-width="2.4"/><path d="M3.8 3.8L12.2 12.2" stroke="#e0380e" stroke-width="2.4"/></svg>
<div class="t" style="left:990px;top:683px;color:#35383d">Cancel</div>
</body></html>
